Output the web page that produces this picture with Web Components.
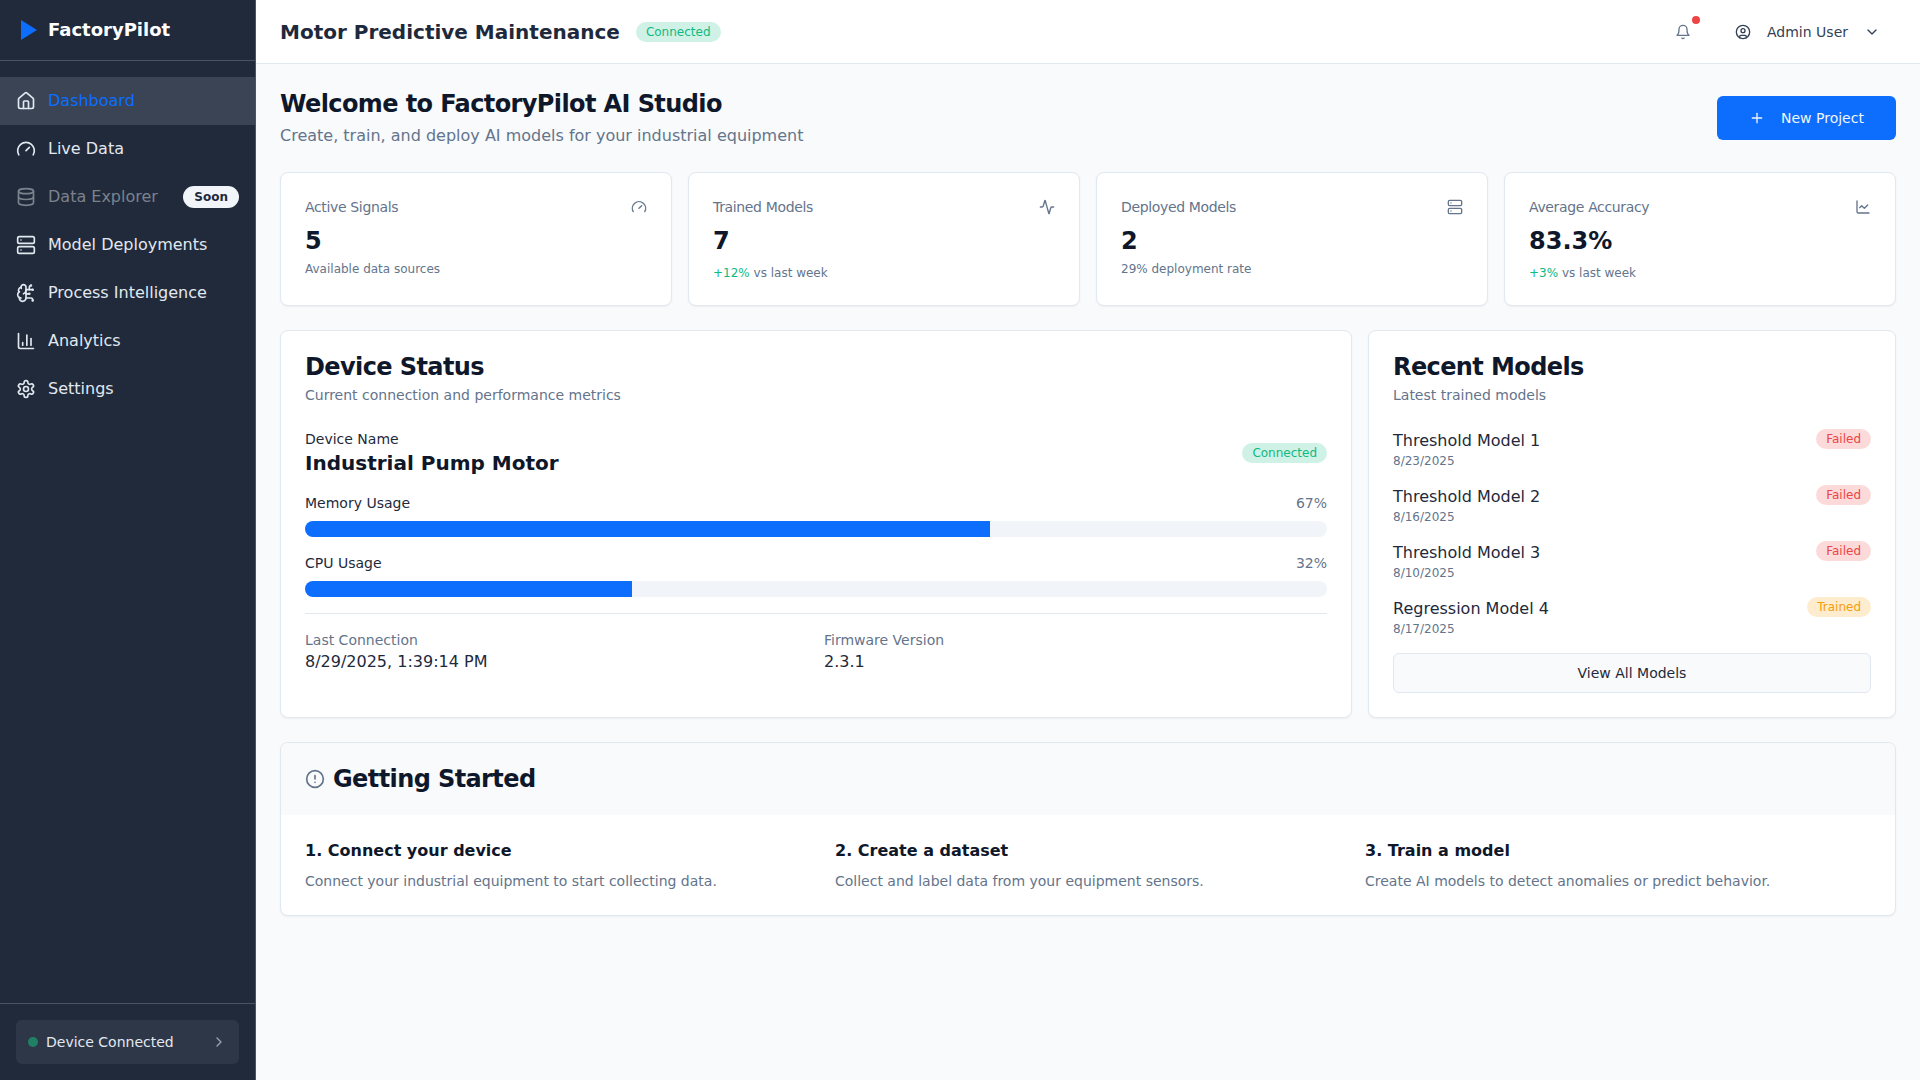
<!DOCTYPE html>
<html lang="en">
<head>
<meta charset="utf-8">
<title>FactoryPilot</title>
<style>
html,body{margin:0;height:100%;}
body{font-family:"DejaVu Sans",sans-serif;background:#f8fafc;color:#0f172a;overflow:hidden;}
</style>
</head>
<body>
<fp-app>
  <fp-sidebar slot="side">
    <fp-nav icon="home" active>Dashboard</fp-nav>
    <fp-nav icon="gauge">Live Data</fp-nav>
    <fp-nav icon="database" disabled badge="Soon">Data Explorer</fp-nav>
    <fp-nav icon="server">Model Deployments</fp-nav>
    <fp-nav icon="brain">Process Intelligence</fp-nav>
    <fp-nav icon="bars">Analytics</fp-nav>
    <fp-nav icon="settings">Settings</fp-nav>
  </fp-sidebar>
  <fp-topbar slot="top" title="Motor Predictive Maintenance"></fp-topbar>
  <fp-welcome>
    <fp-button-primary>New Project</fp-button-primary>
  </fp-welcome>
  <fp-stats>
    <fp-stat label="Active Signals" value="5" note="Available data sources" icon="gauge"></fp-stat>
    <fp-stat label="Trained Models" value="7" delta="+12%" note="vs last week" icon="activity"></fp-stat>
    <fp-stat label="Deployed Models" value="2" note="29% deployment rate" icon="server"></fp-stat>
    <fp-stat label="Average Accuracy" value="83.3%" delta="+3%" note="vs last week" icon="linechart"></fp-stat>
  </fp-stats>
  <fp-columns>
    <fp-card title="Device Status" subtitle="Current connection and performance metrics">
      <fp-device-name name="Industrial Pump Motor"></fp-device-name>
      <fp-progress label="Memory Usage" value="67"></fp-progress>
      <fp-progress label="CPU Usage" value="32"></fp-progress>
      <fp-device-meta></fp-device-meta>
    </fp-card>
    <fp-card title="Recent Models" subtitle="Latest trained models">
      <fp-model name="Threshold Model 1" date="8/23/2025" status="Failed" tone="danger"></fp-model>
      <fp-model name="Threshold Model 2" date="8/16/2025" status="Failed" tone="danger"></fp-model>
      <fp-model name="Threshold Model 3" date="8/10/2025" status="Failed" tone="danger"></fp-model>
      <fp-model name="Regression Model 4" date="8/17/2025" status="Trained" tone="warning"></fp-model>
      <fp-button-outline>View All Models</fp-button-outline>
    </fp-card>
  </fp-columns>
  <fp-getting-started>
    <fp-step title="1. Connect your device">Connect your industrial equipment to start collecting data.</fp-step>
    <fp-step title="2. Create a dataset">Collect and label data from your equipment sensors.</fp-step>
    <fp-step title="3. Train a model">Create AI models to detect anomalies or predict behavior.</fp-step>
  </fp-getting-started>
</fp-app>
<script>
const ICONS={
home:'<path d="M15 21v-8a1 1 0 0 0-1-1h-4a1 1 0 0 0-1 1v8"/><path d="M3 10a2 2 0 0 1 .709-1.528l7-5.999a2 2 0 0 1 2.582 0l7 5.999A2 2 0 0 1 21 10v9a2 2 0 0 1-2 2H5a2 2 0 0 1-2-2z"/>',
gauge:'<path d="m12 14 4-4"/><path d="M3.34 19a10 10 0 1 1 17.32 0"/>',
database:'<ellipse cx="12" cy="5" rx="9" ry="3"/><path d="M3 5V19A9 3 0 0 0 21 19V5"/><path d="M3 12A9 3 0 0 0 21 12"/>',
server:'<rect width="20" height="8" x="2" y="2" rx="2" ry="2"/><rect width="20" height="8" x="2" y="14" rx="2" ry="2"/><line x1="6" x2="6.01" y1="6" y2="6"/><line x1="6" x2="6.01" y1="18" y2="18"/>',
brain:'<path d="M12 5a3 3 0 1 0-5.997.125 4 4 0 0 0-2.526 5.77 4 4 0 0 0 .556 6.588A4 4 0 1 0 12 18Z"/><path d="M9 13a4.5 4.5 0 0 0 3-4"/><path d="M6.003 5.125A3 3 0 0 0 6.401 6.5"/><path d="M3.477 10.896a4 4 0 0 1 .585-.396"/><path d="M6 18a4 4 0 0 1-1.967-.516"/><path d="M12 13h4"/><path d="M12 18h6a2 2 0 0 1 2 2v1"/><path d="M12 8h8"/><path d="M16 8V5a2 2 0 0 1 2-2"/><circle cx="16" cy="13" r=".5"/><circle cx="18" cy="3" r=".5"/><circle cx="20" cy="21" r=".5"/><circle cx="20" cy="8" r=".5"/>',
bars:'<path d="M3 3v16a2 2 0 0 0 2 2h16"/><path d="M18 17V9"/><path d="M13 17V5"/><path d="M8 17v-3"/>',
settings:'<path d="M12.22 2h-.44a2 2 0 0 0-2 2v.18a2 2 0 0 1-1 1.73l-.43.25a2 2 0 0 1-2 0l-.15-.08a2 2 0 0 0-2.73.73l-.22.38a2 2 0 0 0 .73 2.73l.15.1a2 2 0 0 1 1 1.72v.51a2 2 0 0 1-1 1.74l-.15.09a2 2 0 0 0-.73 2.73l.22.38a2 2 0 0 0 2.73.73l.15-.08a2 2 0 0 1 2 0l.43.25a2 2 0 0 1 1 1.73V20a2 2 0 0 0 2 2h.44a2 2 0 0 0 2-2v-.18a2 2 0 0 1 1-1.73l.43-.25a2 2 0 0 1 2 0l.15.08a2 2 0 0 0 2.73-.73l.22-.39a2 2 0 0 0-.73-2.73l-.15-.08a2 2 0 0 1-1-1.74v-.5a2 2 0 0 1 1-1.74l.15-.09a2 2 0 0 0 .73-2.73l-.22-.38a2 2 0 0 0-2.73-.73l-.15.08a2 2 0 0 1-2 0l-.43-.25a2 2 0 0 1-1-1.73V4a2 2 0 0 0-2-2z"/><circle cx="12" cy="12" r="3"/>',
activity:'<path d="M22 12h-2.48a2 2 0 0 0-1.93 1.46l-2.35 8.36a.25.25 0 0 1-.48 0L9.24 2.18a.25.25 0 0 0-.48 0l-2.35 8.36A2 2 0 0 1 4.49 12H2"/>',
linechart:'<path d="M3 3v16a2 2 0 0 0 2 2h16"/><path d="m19 9-5 5-4-4-3 3"/>',
bell:'<path d="M6 8a6 6 0 0 1 12 0c0 7 3 9 3 9H3s3-2 3-9"/><path d="M10.3 21a1.94 1.94 0 0 0 3.4 0"/>',
user:'<circle cx="12" cy="12" r="10"/><circle cx="12" cy="10" r="3"/><path d="M7 20.662V19a2 2 0 0 1 2-2h6a2 2 0 0 1 2 2v1.662"/>',
down:'<path d="m6 9 6 6 6-6"/>',
right:'<path d="m9 18 6-6-6-6"/>',
plus:'<path d="M5 12h14"/><path d="M12 5v14"/>',
alert:'<circle cx="12" cy="12" r="10"/><line x1="12" x2="12" y1="8" y2="12"/><line x1="12" x2="12.01" y1="16" y2="16"/>'
};
class Base extends HTMLElement{
  constructor(){super();this.attachShadow({mode:'open'});}
  connectedCallback(){this.shadowRoot.innerHTML=this.render();}
  a(n){return this.getAttribute(n)||'';}
}
const def=(name,fn)=>customElements.define(name,class extends Base{render(){return fn.call(this);}});

def('fp-icon',function(){
  const s=this.a('size')||20;
  const w=this.a('stroke')||2;
  return `<style>:host{display:inline-flex;flex:none;width:${s}px;height:${s}px}svg{display:block}</style>
  <svg xmlns="http://www.w3.org/2000/svg" width="${s}" height="${s}" viewBox="0 0 24 24" fill="none" stroke="currentColor" stroke-width="${w}" stroke-linecap="round" stroke-linejoin="round">${ICONS[this.a('name')]}</svg>`;
});
def('fp-badge',function(){
  const t={success:['#10b981','rgba(16,185,129,.2)'],danger:['#ef4444','rgba(239,68,68,.2)'],warning:['#f59e0b','rgba(245,158,11,.2)']}[this.a('tone')];
  return `<style>:host{display:inline-block;flex:none;font-size:12px;line-height:16px;padding:2px 10px;border-radius:999px;color:${t[0]};background:${t[1]}}</style><slot></slot>`;
});
def('fp-app',function(){return `<style>
  :host{display:flex;height:100vh;width:100%}
  .right{flex:1;min-width:0;display:flex;flex-direction:column}
  main{flex:1;padding:24px;display:flex;flex-direction:column;box-sizing:border-box}
  </style><slot name="side"></slot><div class="right"><slot name="top"></slot><main><slot></slot></main></div>`;});
def('fp-sidebar',function(){return `<style>
  :host{display:flex;flex-direction:column;flex:none;width:256px;box-sizing:border-box;background:#202a3a;border-right:1px solid #475569;height:100vh}
  .brand{height:61px;box-sizing:border-box;border-bottom:1px solid #475569;padding-bottom:1px;display:flex;align-items:center;padding-left:21px;gap:11px;color:#fff;font-size:18px;font-weight:700;flex:none}
  .brand svg{display:block}
  nav{display:flex;flex-direction:column;padding-top:15.6px;flex:1}
  .foot{border-top:1px solid #475569;padding:16px;flex:none;height:77px;box-sizing:border-box}
  .dev{height:44px;border-radius:6px;background:#2d3748;display:flex;align-items:center;padding:0 12px;gap:8px;font-size:14px;color:#e2e8f0}
  .dot{width:10px;height:10px;border-radius:50%;background:#1f8066;flex:none}
  .dev span{flex:1}
  .dev fp-icon{color:#94a3b8}
  </style>
  <div class="brand"><svg width="16" height="20" viewBox="0 0 16 20"><polygon points="0,0 16,10 0,20" fill="#0d6efd"/></svg><span>FactoryPilot</span></div>
  <nav><slot></slot></nav>
  <div class="foot"><div class="dev"><i class="dot"></i><span>Device Connected</span><fp-icon name="right" size="16"></fp-icon></div></div>`;});
def('fp-nav',function(){
  const act=this.hasAttribute('active'),dis=this.hasAttribute('disabled'),b=this.a('badge');
  return `<style>
  :host{display:flex;align-items:center;height:48px;padding:0 16px;gap:12px;font-size:16px;color:${act?'#0d6efd':dis?'#7b828e':'#e2e8f0'};background:${act?'#3a4454':'transparent'}}
  fp-icon{color:${dis?'#7b828e':'#e2e8f0'}}
  .t{flex:1}
  .b{font-size:12px;font-weight:700;line-height:16px;padding:3px 11px;border-radius:999px;background:#f1f5f9;color:#1e293b}
  </style><fp-icon name="${this.a('icon')}"></fp-icon><span class="t"><slot></slot></span>${b?`<span class="b">${b}</span>`:''}`;
});
def('fp-topbar',function(){return `<style>
  :host{display:flex;align-items:center;flex:none;height:64px;box-sizing:border-box;background:#fff;border-bottom:1px solid #e2e8f0;padding:0 24px}
  h1{margin:0;font-size:20px;line-height:28px;font-weight:700;color:#1e293b}
  .badge{margin-left:16px}
  .sp{flex:1}
  .bell{position:relative;color:#64748b;display:flex;margin-right:44px}
  .bell i{position:absolute;top:-8px;right:-9px;width:8px;height:8px;border-radius:50%;background:#ef4444}
  .u{display:flex;align-items:center;color:#334155;font-size:14px;margin-right:16px}
  .u span{margin:0 16px}
  </style><h1>${this.a('title')}</h1><fp-badge class="badge" tone="success">Connected</fp-badge><span class="sp"></span>
  <div class="bell"><fp-icon name="bell" size="16"></fp-icon><i></i></div>
  <div class="u"><fp-icon name="user" size="16"></fp-icon><span>Admin User</span><fp-icon name="down" size="16"></fp-icon></div>`;});
def('fp-welcome',function(){return `<style>
  :host{display:flex;align-items:center;justify-content:space-between;margin-bottom:24px}
  h2{margin:0;font-size:24px;line-height:32px;letter-spacing:-.6px;color:#0f172a;font-weight:700}
  p{margin:4px 0 0;font-size:16px;line-height:24px;color:#64748b}
  </style><div><h2>Welcome to FactoryPilot AI Studio</h2><p>Create, train, and deploy AI models for your industrial equipment</p></div><slot></slot>`;});
def('fp-button-primary',function(){return `<style>
  :host{display:flex;align-items:center;height:44px;box-sizing:border-box;width:179px;padding-left:32px;gap:16px;border-radius:6px;background:#0d6efd;color:#f1f5f9;font-size:14px}
  </style><fp-icon name="plus" size="16"></fp-icon><span><slot></slot></span>`;});
def('fp-button-outline',function(){return `<style>
  :host{display:flex;align-items:center;justify-content:center;height:40px;box-sizing:border-box;margin-top:16px;border:1px solid #e2e8f0;border-radius:6px;background:#f8fafc;color:#1e293b;font-size:14px}
  </style><slot></slot>`;});
def('fp-stats',function(){return `<style>:host{display:grid;grid-template-columns:repeat(4,1fr);gap:16px;margin-bottom:24px}</style><slot></slot>`;});
def('fp-stat',function(){
  const d=this.a('delta');
  return `<style>
  :host{display:block;box-sizing:border-box;height:134px;background:#fff;border:1px solid #e2e8f0;border-radius:8px;box-shadow:0 1px 2px rgba(0,0,0,.05);padding:24px}
  .top{display:flex;justify-content:space-between;align-items:center;height:20px;font-size:14px;line-height:20px;letter-spacing:-.35px;color:#64748b}
  .v{font-size:24px;font-weight:700;line-height:32px;color:#0f172a;margin-top:8px}
  .n{font-size:12px;line-height:16px;color:#64748b;margin-top:${d?8:4}px}
  .d{color:#10b981}
  </style><div class="top"><span>${this.a('label')}</span><fp-icon name="${this.a('icon')}" size="16"></fp-icon></div>
  <div class="v">${this.a('value')}</div><div class="n">${d?`<span class="d">${d}</span> `:''}${this.a('note')}</div>`;
});
def('fp-columns',function(){return `<style>:host{display:grid;grid-template-columns:1fr 528px;gap:16px;margin-bottom:24px}</style><slot></slot>`;});
def('fp-card',function(){return `<style>
  :host{display:block;box-sizing:border-box;background:#fff;border:1px solid #e2e8f0;border-radius:8px;box-shadow:0 1px 2px rgba(0,0,0,.05);padding:20px 24px 24px}
  h3{margin:0;font-size:24px;line-height:32px;letter-spacing:-.6px;font-weight:700;color:#0f172a}
  p{margin:2px 0 24px;font-size:14px;line-height:20px;color:#64748b}
  </style><h3>${this.a('title')}</h3><p>${this.a('subtitle')}</p><slot></slot>`;});
def('fp-device-name',function(){return `<style>
  :host{display:flex;align-items:center;justify-content:space-between}
  .l{font-size:14px;line-height:20px;color:#1e293b}
  .n{font-size:20px;line-height:28px;font-weight:700;color:#0f172a}
  </style><div><div class="l">Device Name</div><div class="n">${this.a('name')}</div></div><fp-badge tone="success">Connected</fp-badge>`;});
def('fp-progress',function(){const v=this.a('value');return `<style>
  :host{display:block;margin-top:16px}
  .h{display:flex;justify-content:space-between;font-size:14px;line-height:20px;color:#1e293b;margin-bottom:8px}
  .h b{font-weight:400;color:#64748b}
  .t{height:16px;background:#f1f5f9;border-radius:8px;overflow:hidden}
  .f{height:100%;background:#0d6efd;width:${v}%}
  </style><div class="h"><span>${this.a('label')}</span><b>${v}%</b></div><div class="t"><div class="f"></div></div>`;});
def('fp-device-meta',function(){return `<style>
  :host{display:grid;grid-template-columns:1fr 1fr;gap:16px;margin-top:16px;padding-top:16px;border-top:1px solid #e2e8f0}
  .l{font-size:14px;line-height:20px;color:#64748b}
  .v{font-size:16px;line-height:24px;color:#1e293b}
  </style><div><div class="l">Last Connection</div><div class="v">8/29/2025, 1:39:14 PM</div></div><div><div class="l">Firmware Version</div><div class="v">2.3.1</div></div>`;});
def('fp-model',function(){return `<style>
  :host{display:flex;justify-content:space-between;align-items:flex-start;margin-bottom:16px}
  :host(:nth-of-type(4)){margin-bottom:0}
  .n{font-size:16px;line-height:24px;color:#1e293b}
  .d{font-size:12px;line-height:16px;color:#64748b}
  </style><div><div class="n">${this.a('name')}</div><div class="d">${this.a('date')}</div></div><fp-badge tone="${this.a('tone')}">${this.a('status')}</fp-badge>`;});
def('fp-getting-started',function(){return `<style>
  :host{display:block;box-sizing:border-box;background:#fff;border:1px solid #e2e8f0;border-radius:8px;box-shadow:0 1px 2px rgba(0,0,0,.05);overflow:hidden}
  .h{display:flex;align-items:center;gap:8px;height:72px;padding:0 24px;background:#f8fafc;color:#0f172a;font-size:24px;letter-spacing:-.6px;font-weight:700}
  .h fp-icon{color:#64748b}
  .b{display:grid;grid-template-columns:repeat(3,1fr);gap:24px;padding:24px}
  </style><div class="h"><fp-icon name="alert" size="20"></fp-icon><span>Getting Started</span></div><div class="b"><slot></slot></div>`;});
def('fp-step',function(){return `<style>
  :host{display:block}
  h4{margin:0 0 8px;font-size:16px;line-height:24px;font-weight:700;color:#0f172a}
  p{margin:0;font-size:14px;line-height:20px;color:#64748b}
  </style><h4>${this.a('title')}</h4><p><slot></slot></p>`;});
</script>
</body>
</html>
